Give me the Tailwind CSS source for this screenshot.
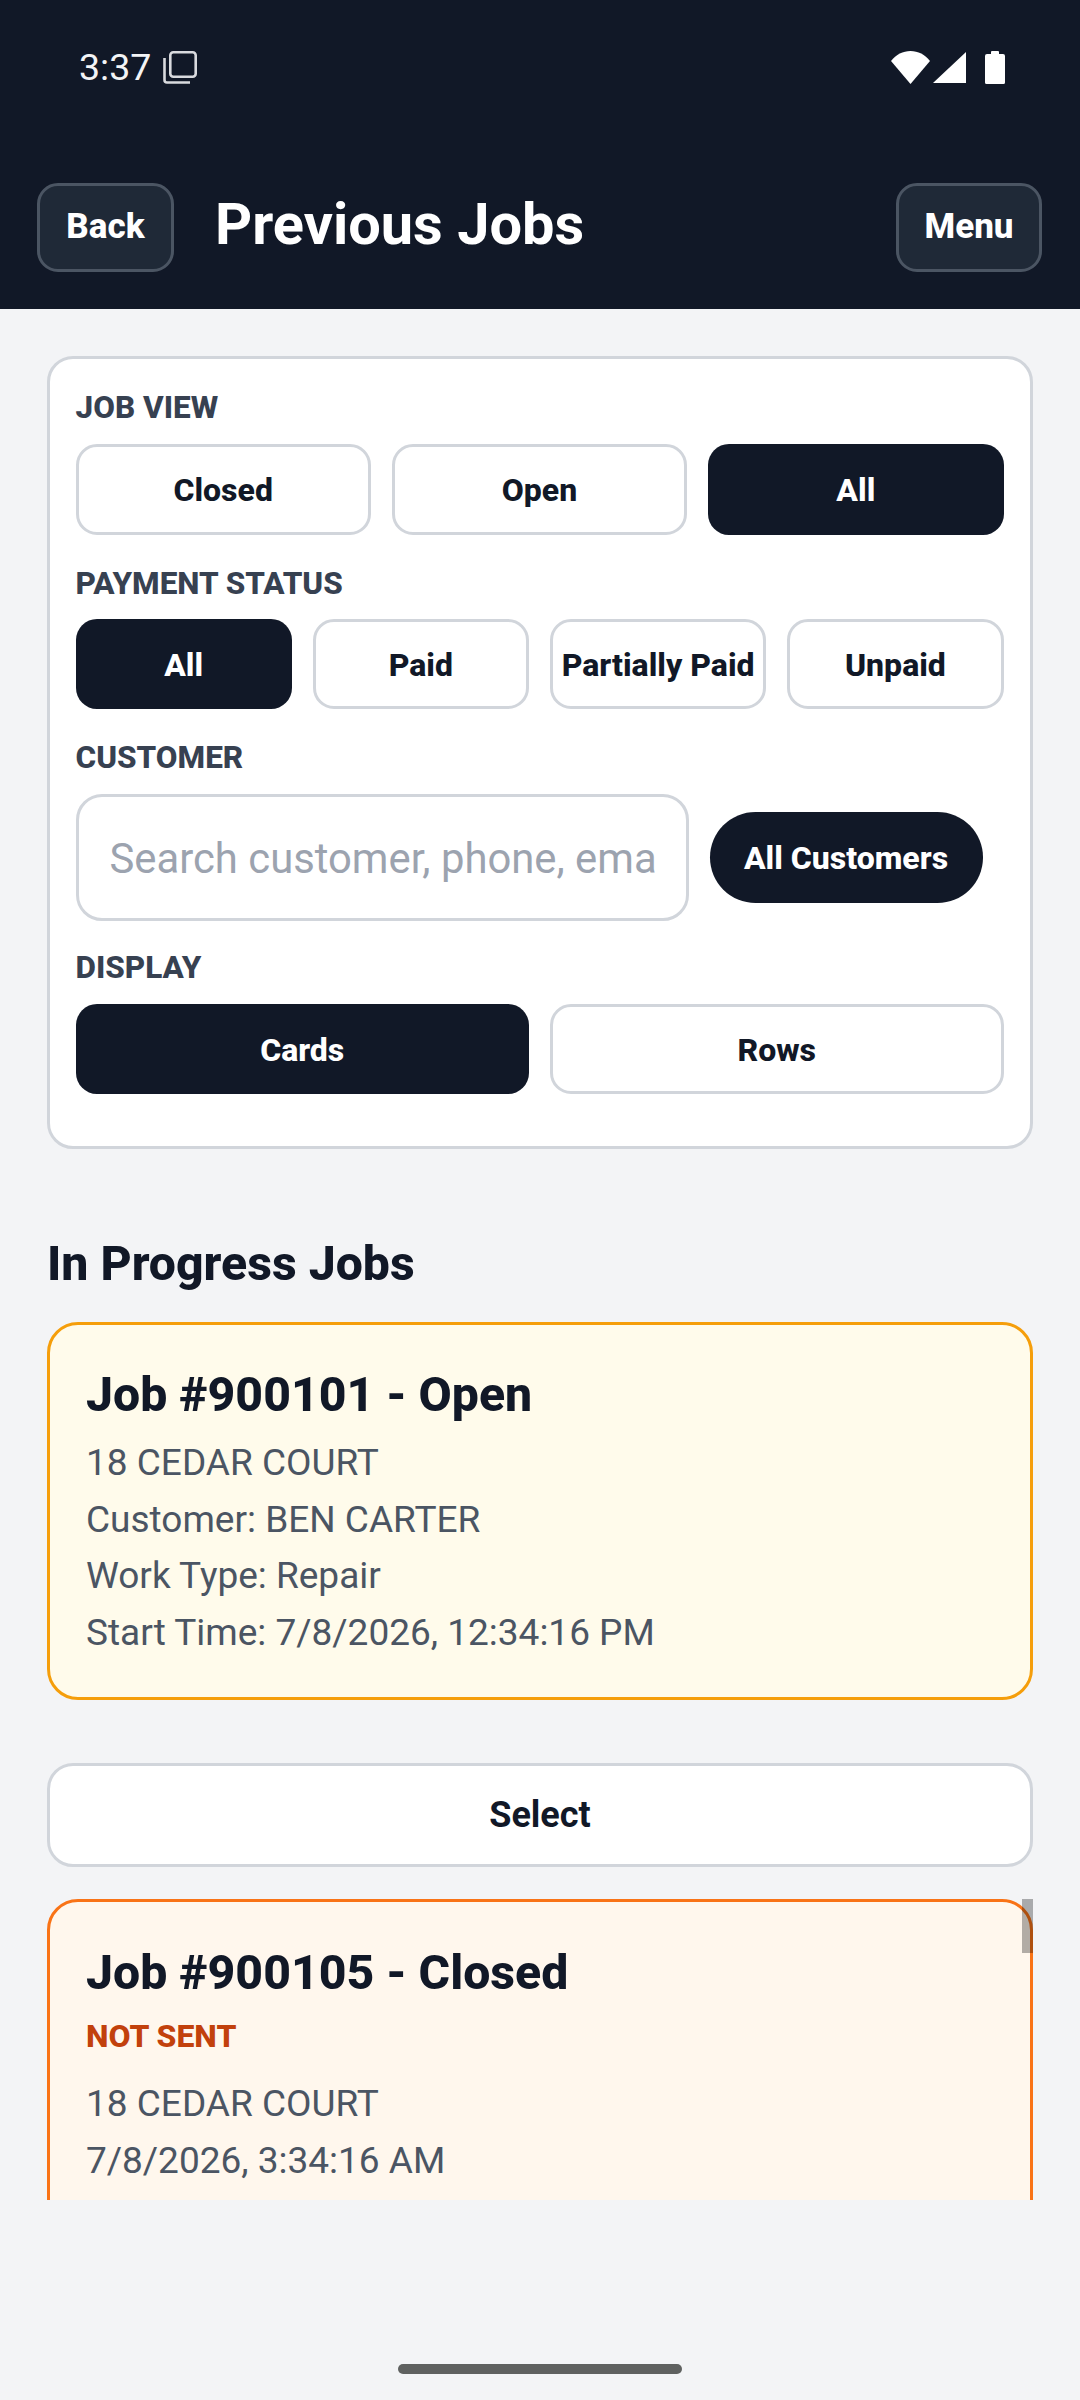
<!DOCTYPE html>
<html lang="en">
  <head>
    <meta charset="UTF-8" />
    <meta name="viewport" content="width=device-width, initial-scale=1.0" />
    <title>Previous Jobs</title>
    <script src="https://cdn.jsdelivr.net/npm/@tailwindcss/browser@4"></script>
  </head>
  <body class="h-[2400px] overflow-hidden bg-[#f3f4f6] font-['Roboto',sans-serif] relative">
    <!-- status bar + header -->
    <header class="h-[309px] bg-[#111827] flex flex-col">
      <div class="h-[183px] pl-[79px] pr-[75px] pt-[45px] flex justify-between items-start text-white">
        <div class="flex items-center gap-[12px] h-[44px]">
          <span class="text-[37.5px] leading-[44px] font-normal text-[#f3f4f6]">3:37</span>
          <svg width="34" height="33" viewBox="0 0 34 33" fill="none" stroke="#d9dade" stroke-width="2.600">
            <rect x="7.300" y="1.300" width="25.400" height="24.400" rx="3"></rect>
            <path d="M1.500 7v22a2.500 2.500 0 0 0 2.500 2.500h23"></path>
          </svg>
        </div>
        <div class="flex items-center h-[44px]">
          <svg width="39" height="33" viewBox="0 0 39 33" fill="#fff">
            <path d="M0 10C5 3.500 12 0 19.500 0S34 3.500 39 10L19.500 33z"></path>
          </svg>
          <svg class="ml-[3px]" width="33" height="31" viewBox="0 0 33 31" fill="#fff">
            <path d="M33 0v31H0z"></path>
          </svg>
          <svg class="ml-[19px]" width="20" height="33" viewBox="0 0 20 33" fill="#fff">
            <path d="M6 3V1a1 1 0 0 1 1-1h6a1 1 0 0 1 1 1v2h4a2 2 0 0 1 2 2v26.500a1.500 1.500 0 0 1-1.500 1.500h-17A1.500 1.500 0 0 1 0 31.500V5a2 2 0 0 1 2-2z"></path>
          </svg>
        </div>
      </div>
      <div class="flex items-start pl-[37px] pr-[38px]">
        <a class="h-[89px] w-[137px] flex items-center justify-center rounded-[21px] bg-[#1f2937] border-[3px] border-[#4b5563] text-white font-extrabold text-[35px]">Back</a>
        <h1 class="ml-[41px] flex-1 text-white font-bold text-[57.75px] leading-[82px]">Previous Jobs</h1>
        <a class="h-[89px] w-[146px] flex items-center justify-center rounded-[21px] bg-[#1f2937] border-[3px] border-[#4b5563] text-white font-extrabold text-[35px]">Menu</a>
      </div>
    </header>

    <main class="h-[1891px] overflow-hidden px-[47px] pt-[47px]">
      <!-- filters -->
      <section class="h-[793px] rounded-[26px] bg-white border-[3px] border-[#d1d5db] pl-[25.500px] pr-[26.500px] pt-[30px]">
        <div class="text-[31.500px] leading-[38px] font-extrabold text-[#374151]">JOB VIEW</div>
        <div class="mt-[17px] grid grid-cols-3 gap-[21px]">
          <button class="h-[91px] rounded-[21px] border-[3px] border-[#d1d5db] bg-white text-[#111827] font-extrabold text-[32px]">Closed</button>
          <button class="h-[91px] rounded-[21px] border-[3px] border-[#d1d5db] bg-white text-[#111827] font-extrabold text-[32px]">Open</button>
          <button class="h-[91px] rounded-[21px] bg-[#111827] text-white font-extrabold text-[32px]">All</button>
        </div>
        <div class="mt-[30px] text-[31.500px] leading-[38px] font-extrabold text-[#374151]">PAYMENT STATUS</div>
        <div class="mt-[16px] grid grid-cols-4 gap-[21px]">
          <button class="h-[90px] pt-[2px] rounded-[21px] bg-[#111827] text-white font-extrabold text-[32px]">All</button>
          <button class="h-[90px] pt-[2px] rounded-[21px] border-[3px] border-[#d1d5db] bg-white text-[#111827] font-extrabold text-[32px]">Paid</button>
          <button class="h-[90px] pt-[2px] rounded-[21px] border-[3px] border-[#d1d5db] bg-white text-[#111827] font-extrabold text-[32px] whitespace-nowrap">Partially Paid</button>
          <button class="h-[90px] pt-[2px] rounded-[21px] border-[3px] border-[#d1d5db] bg-white text-[#111827] font-extrabold text-[32px]">Unpaid</button>
        </div>
        <div class="mt-[30px] text-[31.500px] leading-[38px] font-extrabold text-[#374151]">CUSTOMER</div>
        <div class="mt-[17px] flex items-center gap-[21px]">
          <div class="w-[613px] h-[127px] pt-[3px] rounded-[26px] border-[3px] border-[#d1d5db] bg-white pl-[31px] flex items-center">
            <span class="text-[#9ca3af] text-[41.800px] whitespace-nowrap">Search customer, phone, ema</span>
          </div>
          <button class="h-[91px] w-[273px] rounded-full bg-[#111827] text-white font-extrabold text-[32px]">All Customers</button>
        </div>
        <div class="mt-[28px] text-[31.500px] leading-[38px] font-extrabold text-[#374151]">DISPLAY</div>
        <div class="mt-[17px] grid grid-cols-2 gap-[21px]">
          <button class="h-[90px] pt-[2px] rounded-[21px] bg-[#111827] text-white font-extrabold text-[32px]">Cards</button>
          <button class="h-[90px] pt-[2px] rounded-[21px] border-[3px] border-[#d1d5db] bg-white text-[#111827] font-extrabold text-[32px]">Rows</button>
        </div>
      </section>

      <h2 class="mt-[84px] text-[#111827] font-extrabold text-[48.200px] leading-[62px]">In Progress Jobs</h2>

      <!-- open job -->
      <article class="mt-[27px] h-[378px] rounded-[31px] border-[3px] border-[#f59e0b] bg-[#fffbeb] px-[36px] pt-[39px]">
        <h3 class="text-[#111827] font-extrabold text-[48.200px] leading-[62px]">Job #900101 - Open</h3>
        <div class="mt-[9px] text-[#4b5563] text-[37px] leading-[56.500px]">
          <p>18 CEDAR COURT</p>
          <p>Customer: BEN CARTER</p>
          <p>Work Type: Repair</p>
          <p>Start Time: 7/8/2026, 12:34:16 PM</p>
        </div>
      </article>

      <button class="mt-[63px] w-full h-[104px] rounded-[26px] border-[3px] border-[#d1d5db] bg-white text-[#111827] font-bold text-[36px]">Select</button>

      <!-- closed job -->
      <article class="relative mt-[32px] h-[400px] rounded-[31px] border-[3px] border-[#f97316] bg-[#fff7ed] px-[36px] pt-[40px]">
        <h3 class="text-[#111827] font-extrabold text-[48.200px] leading-[62px]">Job #900105 - Closed</h3>
        <p class="mt-[11px] text-[#c2410c] font-extrabold text-[32px] leading-[42px]">NOT SENT</p>
        <div class="mt-[19px] text-[#4b5563] text-[37px] leading-[56.500px]">
          <p>18 CEDAR COURT</p>
          <p>7/8/2026, 3:34:16 AM</p>
        </div>
      </article>
    </main>

    <!-- scroll thumb, over the card -->
    <div class="absolute left-[1022px] top-[1899px] w-[11px] h-[54px] bg-black/30"></div>
    <!-- gesture handle -->
    <div class="absolute left-[398px] top-[2364px] w-[284px] h-[10px] rounded-full bg-[#5f6160]"></div>
  </body>
</html>
